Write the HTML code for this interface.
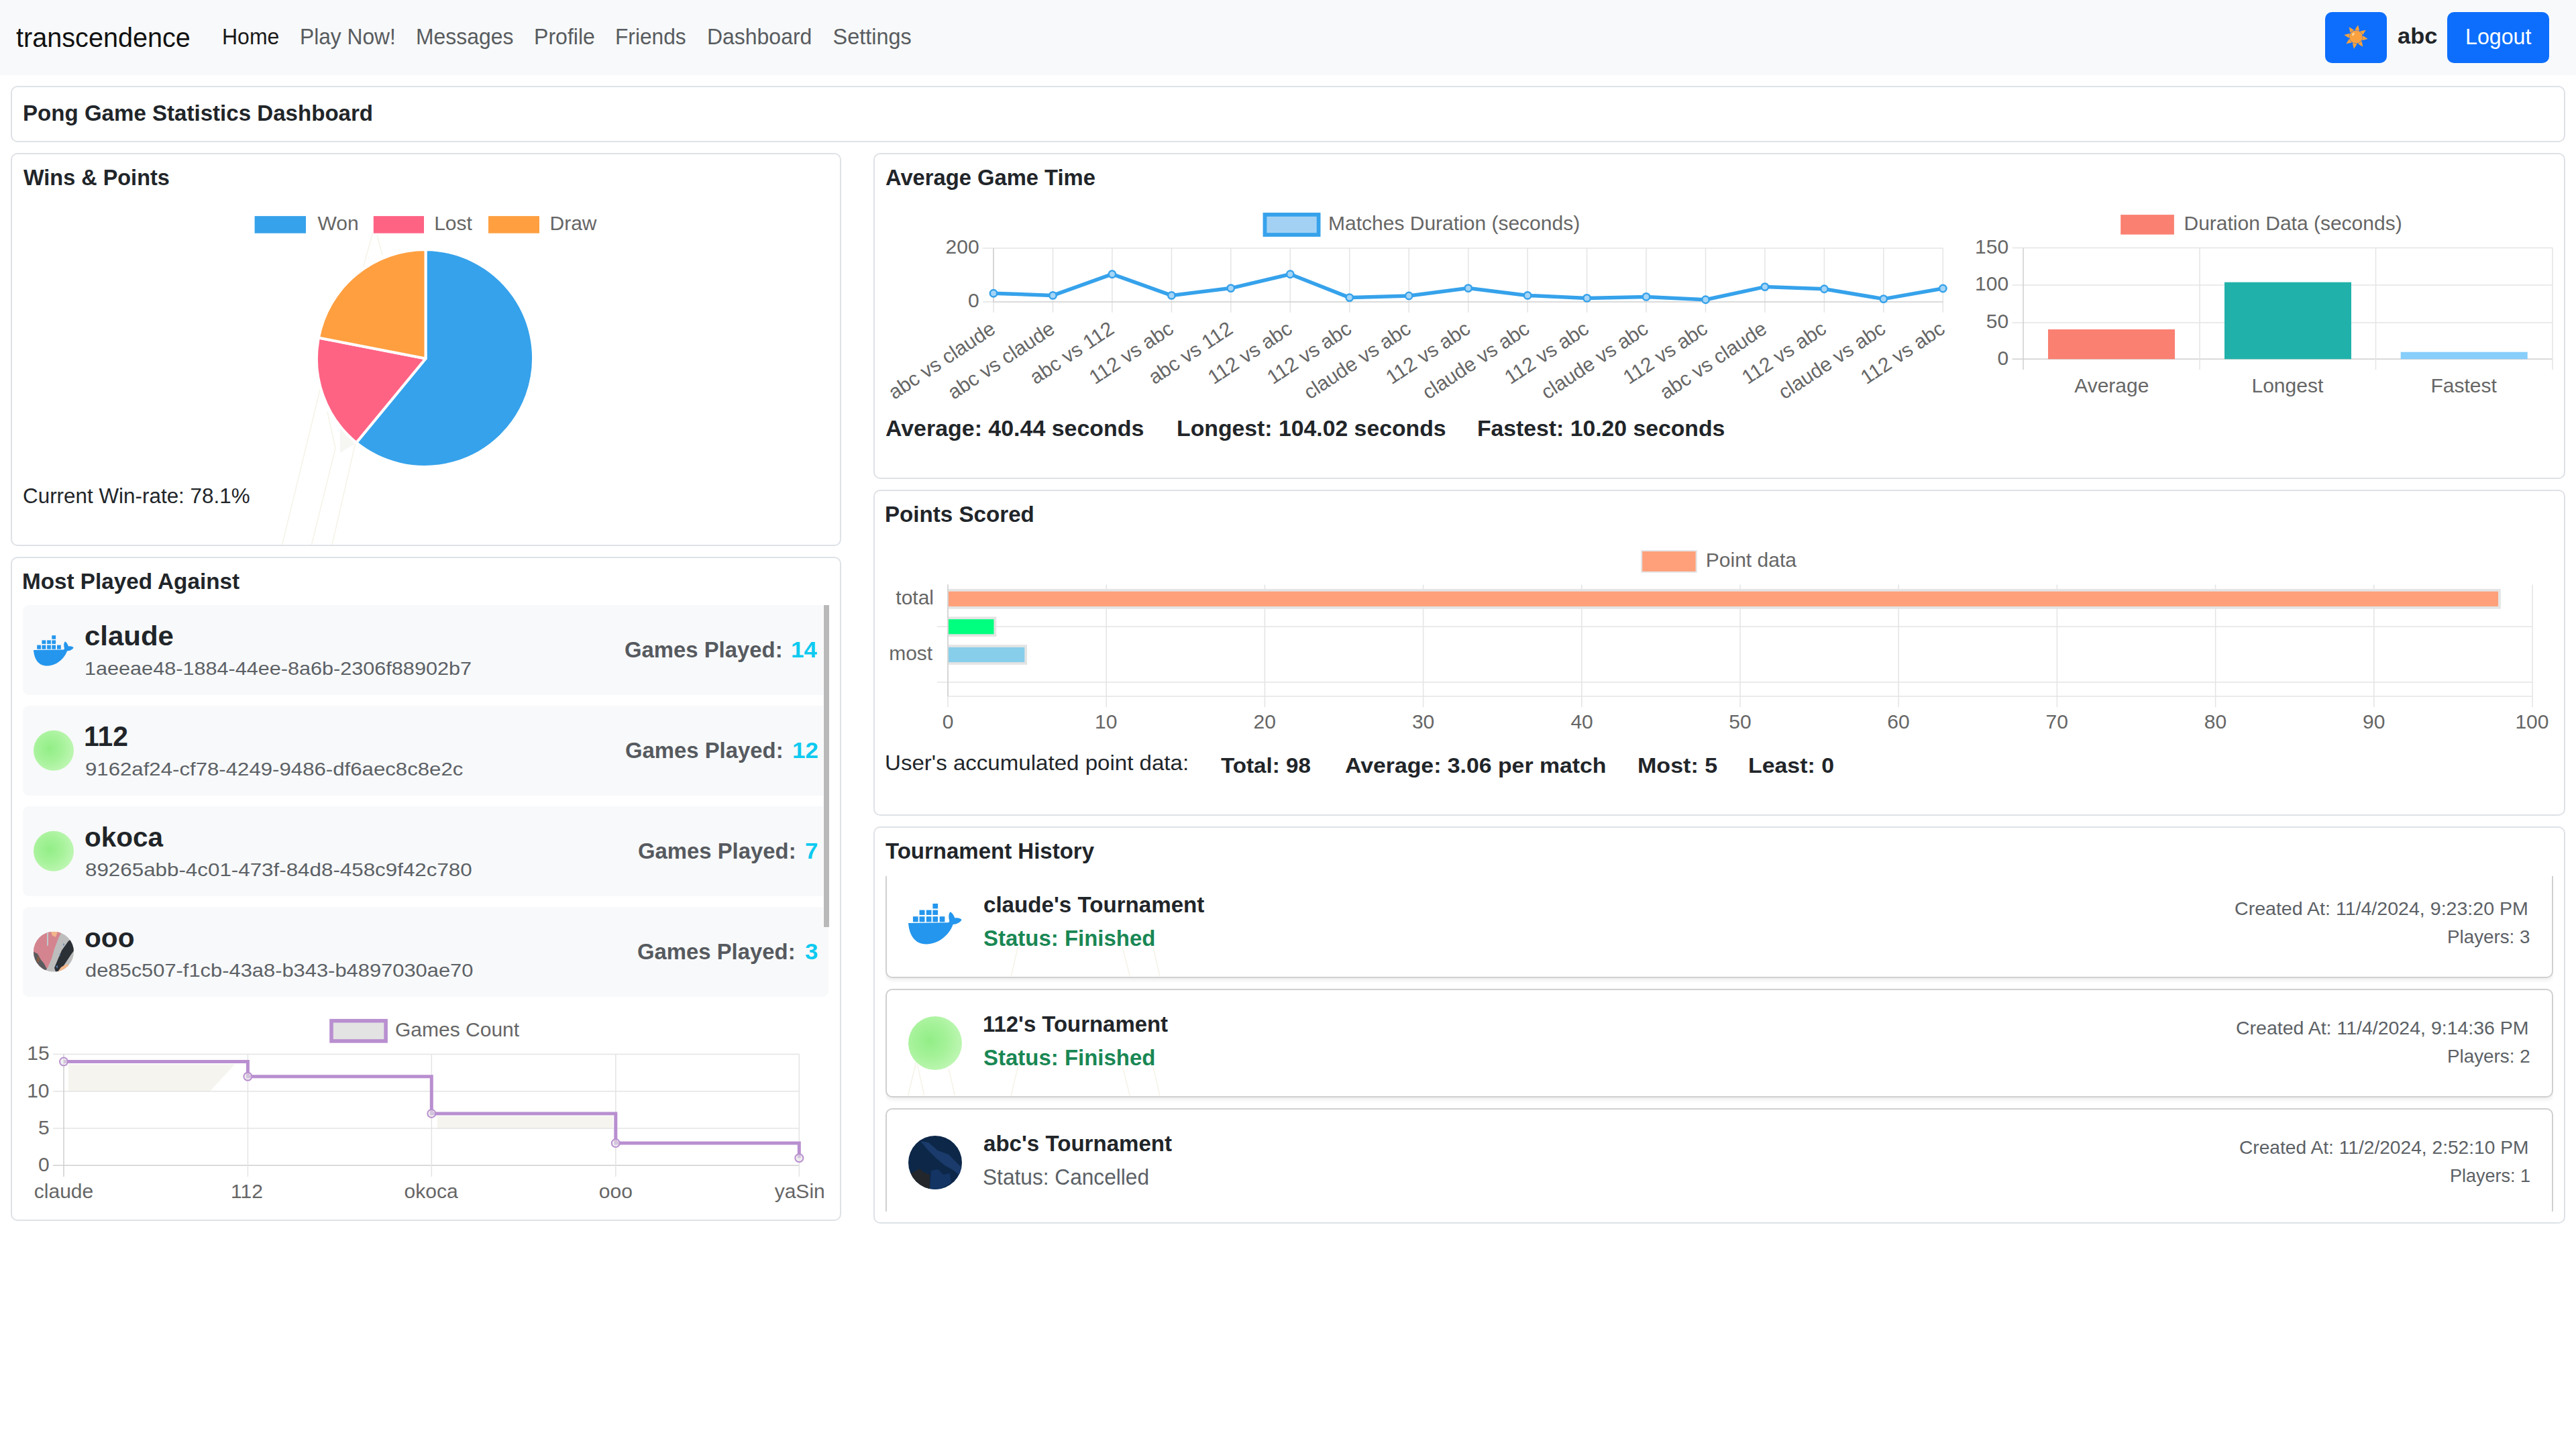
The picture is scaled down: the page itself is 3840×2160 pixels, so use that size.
<!DOCTYPE html>
<html><head><meta charset="utf-8"><style>
html,body{margin:0;padding:0;background:#fff;}
body{width:3840px;height:2160px;position:relative;overflow:hidden;font-family:"Liberation Sans",sans-serif;}
.t{position:absolute;white-space:nowrap;line-height:1.1172;transform-origin:0 0;}
svg text{font-family:"Liberation Sans",sans-serif;}
</style></head><body>
<div style="position:absolute;left:0.0px;top:0.0px;width:3840.0px;height:112.0px;background:#f8f9fa;"></div>
<div class="t" style="left:24.4px;top:32.70px;font-size:40.67px;line-height:46px;color:#111;transform:scaleX(0.9744);">transcendence</div>
<div class="t" style="left:330.8px;top:36.80px;font-size:32.46px;line-height:36px;color:#1a1a1a;transform:scaleX(0.9856);">Home</div>
<div class="t" style="left:447.1px;top:36.80px;font-size:32.46px;line-height:36px;color:#585c60;transform:scaleX(0.9771);">Play Now!</div>
<div class="t" style="left:619.8px;top:36.80px;font-size:32.46px;line-height:36px;color:#585c60;transform:scaleX(0.9826);">Messages</div>
<div class="t" style="left:796.2px;top:36.80px;font-size:32.46px;line-height:36px;color:#585c60;transform:scaleX(0.9885);">Profile</div>
<div class="t" style="left:917.4px;top:36.80px;font-size:32.46px;line-height:36px;color:#585c60;transform:scaleX(0.9769);">Friends</div>
<div class="t" style="left:1054.4px;top:36.80px;font-size:32.46px;line-height:36px;color:#585c60;transform:scaleX(0.9847);">Dashboard</div>
<div class="t" style="left:1241.5px;top:36.80px;font-size:32.46px;line-height:36px;color:#585c60;">Settings</div>
<div style="position:absolute;left:3466.0px;top:18.0px;width:92.0px;height:76.0px;background:#0d6efd;border-radius:10px;"></div>
<div style="position:absolute;left:3648.0px;top:18.0px;width:152.0px;height:76.0px;background:#0d6efd;border-radius:10px;"></div>
<div class="t" style="left:3573.9px;top:35.00px;font-size:32.97px;line-height:37px;font-weight:700;color:#212529;transform:scaleX(1.0441);">abc</div>
<div class="t" style="left:3674.8px;top:35.90px;font-size:33.26px;line-height:37px;color:#fff;transform:scaleX(0.9680);">Logout</div>
<div style="position:absolute;left:16.0px;top:128.0px;width:3808.0px;height:84.0px;box-sizing:border-box;border:2px solid #dee2e6;border-radius:10px;background:#fff;"></div>
<div class="t" style="left:33.7px;top:150.00px;font-size:32.68px;line-height:37px;font-weight:700;color:#212529;transform:scaleX(1.0125);">Pong Game Statistics Dashboard</div>
<div style="position:absolute;left:16.0px;top:228.0px;width:1238.0px;height:586.0px;box-sizing:border-box;border:2px solid #dee2e6;border-radius:10px;background:#fff;"></div>
<div class="t" style="left:35.2px;top:246.00px;font-size:32.82px;line-height:37px;font-weight:700;color:#212529;transform:scaleX(0.9887);">Wins &amp; Points</div>
<div class="t" style="left:473.5px;top:316.00px;font-size:30.00px;line-height:33px;color:#666666;">Won</div>
<div class="t" style="left:647.2px;top:316.00px;font-size:30.00px;line-height:33px;color:#666666;">Lost</div>
<div class="t" style="left:819.5px;top:316.00px;font-size:30.00px;line-height:33px;color:#666666;">Draw</div>
<div class="t" style="left:33.9px;top:720.70px;font-size:32.10px;line-height:36px;color:#212529;transform:scaleX(0.9790);">Current Win-rate: 78.1%</div>
<div style="position:absolute;left:1302.0px;top:228.0px;width:2522.0px;height:486.0px;box-sizing:border-box;border:2px solid #dee2e6;border-radius:10px;background:#fff;"></div>
<div class="t" style="left:1319.8px;top:245.90px;font-size:32.97px;line-height:37px;font-weight:700;color:#212529;transform:scaleX(0.9927);">Average Game Time</div>
<div class="t" style="left:1980.0px;top:316.00px;font-size:30.00px;line-height:33px;color:#666666;">Matches Duration (seconds)</div>
<div class="t" style="left:1409.6px;top:350.80px;font-size:30.00px;line-height:33px;color:#666666;">200</div>
<div class="t" style="left:1443.0px;top:430.60px;font-size:30.00px;line-height:33px;color:#666666;">0</div>
<div class="t" style="left:1319.8px;top:620.20px;font-size:32.97px;line-height:37px;font-weight:700;color:#212529;transform:scaleX(1.0291);">Average: 40.44 seconds</div>
<div class="t" style="left:1753.7px;top:620.20px;font-size:32.97px;line-height:37px;font-weight:700;color:#212529;transform:scaleX(1.0243);">Longest: 104.02 seconds</div>
<div class="t" style="left:2201.7px;top:620.20px;font-size:32.97px;line-height:37px;font-weight:700;color:#212529;transform:scaleX(1.0231);">Fastest: 10.20 seconds</div>
<div class="t" style="left:3255.5px;top:316.00px;font-size:30.00px;line-height:33px;color:#666666;">Duration Data (seconds)</div>
<div class="t" style="left:2944.1px;top:350.80px;font-size:30.00px;line-height:33px;color:#666666;">150</div>
<div class="t" style="left:2944.1px;top:406.20px;font-size:30.00px;line-height:33px;color:#666666;">100</div>
<div class="t" style="left:2960.8px;top:462.20px;font-size:30.00px;line-height:33px;color:#666666;">50</div>
<div class="t" style="left:2977.5px;top:516.50px;font-size:30.00px;line-height:33px;color:#666666;">0</div>
<div class="t" style="left:3092.2px;top:557.50px;font-size:30.00px;line-height:33px;color:#666666;">Average</div>
<div class="t" style="left:3356.5px;top:557.50px;font-size:30.00px;line-height:33px;color:#666666;">Longest</div>
<div class="t" style="left:3623.4px;top:557.50px;font-size:30.00px;line-height:33px;color:#666666;">Fastest</div>
<div style="position:absolute;left:1302.0px;top:730.0px;width:2522.0px;height:486.0px;box-sizing:border-box;border:2px solid #dee2e6;border-radius:10px;background:#fff;"></div>
<div class="t" style="left:1319.0px;top:748.00px;font-size:32.68px;line-height:37px;font-weight:700;color:#212529;transform:scaleX(1.0145);">Points Scored</div>
<div class="t" style="left:2542.8px;top:818.00px;font-size:30.00px;line-height:33px;color:#666666;">Point data</div>
<div class="t" style="left:1404.7px;top:1059.00px;font-size:30.00px;line-height:33px;color:#666666;">0</div>
<div class="t" style="left:1632.0px;top:1059.00px;font-size:30.00px;line-height:33px;color:#666666;">10</div>
<div class="t" style="left:1868.5px;top:1059.00px;font-size:30.00px;line-height:33px;color:#666666;">20</div>
<div class="t" style="left:2104.9px;top:1059.00px;font-size:30.00px;line-height:33px;color:#666666;">30</div>
<div class="t" style="left:2341.4px;top:1059.00px;font-size:30.00px;line-height:33px;color:#666666;">40</div>
<div class="t" style="left:2577.3px;top:1059.00px;font-size:30.00px;line-height:33px;color:#666666;">50</div>
<div class="t" style="left:2813.3px;top:1059.00px;font-size:30.00px;line-height:33px;color:#666666;">60</div>
<div class="t" style="left:3049.5px;top:1059.00px;font-size:30.00px;line-height:33px;color:#666666;">70</div>
<div class="t" style="left:3285.8px;top:1059.00px;font-size:30.00px;line-height:33px;color:#666666;">80</div>
<div class="t" style="left:3522.0px;top:1059.00px;font-size:30.00px;line-height:33px;color:#666666;">90</div>
<div class="t" style="left:3749.4px;top:1059.00px;font-size:30.00px;line-height:33px;color:#666666;">100</div>
<div class="t" style="left:1335.3px;top:874.00px;font-size:30.00px;line-height:33px;color:#666666;">total</div>
<div class="t" style="left:1325.2px;top:957.00px;font-size:30.00px;line-height:33px;color:#666666;">most</div>
<div class="t" style="left:1318.5px;top:1119.00px;font-size:31.81px;line-height:36px;color:#212529;transform:scaleX(1.0403);">User&#x27;s accumulated point data:</div>
<div class="t" style="left:1819.6px;top:1123.00px;font-size:31.95px;line-height:36px;font-weight:700;color:#212529;transform:scaleX(1.0381);">Total: 98</div>
<div class="t" style="left:2005.2px;top:1123.00px;font-size:31.95px;line-height:36px;font-weight:700;color:#212529;transform:scaleX(1.0583);">Average: 3.06 per match</div>
<div class="t" style="left:2440.7px;top:1123.00px;font-size:31.95px;line-height:36px;font-weight:700;color:#212529;transform:scaleX(1.0661);">Most: 5</div>
<div class="t" style="left:2606.3px;top:1123.00px;font-size:31.95px;line-height:36px;font-weight:700;color:#212529;transform:scaleX(1.0604);">Least: 0</div>
<div style="position:absolute;left:16.0px;top:830.0px;width:1238.0px;height:990.0px;box-sizing:border-box;border:2px solid #dee2e6;border-radius:10px;background:#fff;"></div>
<div class="t" style="left:33.0px;top:848.00px;font-size:32.82px;line-height:37px;font-weight:700;color:#212529;transform:scaleX(1.0137);">Most Played Against</div>
<div style="position:absolute;left:34.0px;top:902.2px;width:1201.0px;height:133.5px;background:#f8f9fa;border-radius:9px;"></div>
<div style="position:absolute;left:34.0px;top:1052.2px;width:1201.0px;height:133.5px;background:#f8f9fa;border-radius:9px;"></div>
<div style="position:absolute;left:34.0px;top:1202.2px;width:1201.0px;height:133.5px;background:#f8f9fa;border-radius:9px;"></div>
<div style="position:absolute;left:34.0px;top:1352.2px;width:1201.0px;height:133.5px;background:#f8f9fa;border-radius:9px;"></div>
<div class="t" style="left:125.8px;top:925.20px;font-size:41.10px;line-height:46px;font-weight:700;color:#212529;transform:scaleX(1.0204);">claude</div>
<div class="t" style="left:125.7px;top:980.70px;font-size:27.89px;line-height:31px;color:#5c6166;transform:scaleX(1.0981);">1aeeae48-1884-44ee-8a6b-2306f88902b7</div>
<div class="t" style="left:1179.3px;top:950.80px;font-size:32.29px;line-height:36px;font-weight:700;color:#0dcaf0;transform:scaleX(1.0829);">14</div>
<div class="t" style="left:930.5px;top:950.80px;font-size:32.29px;line-height:36px;font-weight:700;color:#565a5f;transform:scaleX(1.0177);">Games Played:</div>
<div class="t" style="left:124.8px;top:1074.20px;font-size:41.83px;line-height:47px;font-weight:700;color:#212529;transform:scaleX(0.9774);">112</div>
<div class="t" style="left:126.5px;top:1130.70px;font-size:27.89px;line-height:31px;color:#5c6166;transform:scaleX(1.1185);">9162af24-cf78-4249-9486-df6aec8c8e2c</div>
<div class="t" style="left:1180.5px;top:1100.80px;font-size:32.29px;line-height:36px;font-weight:700;color:#0dcaf0;transform:scaleX(1.0829);">12</div>
<div class="t" style="left:931.7px;top:1100.80px;font-size:32.29px;line-height:36px;font-weight:700;color:#565a5f;transform:scaleX(1.0177);">Games Played:</div>
<div class="t" style="left:125.5px;top:1225.20px;font-size:41.10px;line-height:46px;font-weight:700;color:#212529;transform:scaleX(0.9859);">okoca</div>
<div class="t" style="left:126.6px;top:1280.70px;font-size:27.89px;line-height:31px;color:#5c6166;transform:scaleX(1.1242);">89265abb-4c01-473f-84d8-458c9f42c780</div>
<div class="t" style="left:1200.1px;top:1250.80px;font-size:32.29px;line-height:36px;font-weight:700;color:#0dcaf0;transform:scaleX(1.0829);">7</div>
<div class="t" style="left:950.5px;top:1250.80px;font-size:32.29px;line-height:36px;font-weight:700;color:#565a5f;transform:scaleX(1.0177);">Games Played:</div>
<div class="t" style="left:125.5px;top:1375.20px;font-size:41.10px;line-height:46px;font-weight:700;color:#212529;transform:scaleX(0.9887);">ooo</div>
<div class="t" style="left:126.7px;top:1430.70px;font-size:27.89px;line-height:31px;color:#5c6166;transform:scaleX(1.1073);">de85c507-f1cb-43a8-b343-b4897030ae70</div>
<div class="t" style="left:1199.8px;top:1400.80px;font-size:32.29px;line-height:36px;font-weight:700;color:#0dcaf0;transform:scaleX(1.0829);">3</div>
<div class="t" style="left:949.6px;top:1400.80px;font-size:32.29px;line-height:36px;font-weight:700;color:#565a5f;transform:scaleX(1.0177);">Games Played:</div>
<div style="position:absolute;left:1227.0px;top:902.2px;width:1.2px;height:479.5px;background:#fdfdfd;"></div>
<div style="position:absolute;left:1228.2px;top:902.2px;width:7.6px;height:479.5px;background:#b9b9b9;"></div>
<div class="t" style="left:589.0px;top:1518.00px;font-size:30.00px;line-height:33px;color:#666666;">Games Count</div>
<div class="t" style="left:40.3px;top:1553.30px;font-size:30.00px;line-height:33px;color:#666666;">15</div>
<div class="t" style="left:40.2px;top:1608.57px;font-size:30.00px;line-height:33px;color:#666666;">10</div>
<div class="t" style="left:57.0px;top:1663.83px;font-size:30.00px;line-height:33px;color:#666666;">5</div>
<div class="t" style="left:56.9px;top:1719.10px;font-size:30.00px;line-height:33px;color:#666666;">0</div>
<div class="t" style="left:50.8px;top:1759.00px;font-size:30.00px;line-height:33px;color:#666666;">claude</div>
<div class="t" style="left:344.0px;top:1759.00px;font-size:30.00px;line-height:33px;color:#666666;">112</div>
<div class="t" style="left:602.6px;top:1759.00px;font-size:30.00px;line-height:33px;color:#666666;">okoca</div>
<div class="t" style="left:892.8px;top:1759.00px;font-size:30.00px;line-height:33px;color:#666666;">ooo</div>
<div class="t" style="left:1154.7px;top:1759.00px;font-size:30.00px;line-height:33px;color:#666666;">yaSin</div>
<div style="position:absolute;left:1302.0px;top:1232.0px;width:2522.0px;height:592.0px;box-sizing:border-box;border:2px solid #dee2e6;border-radius:10px;background:#fff;"></div>
<div class="t" style="left:1320.4px;top:1250.00px;font-size:32.82px;line-height:37px;font-weight:700;color:#212529;transform:scaleX(1.0054);">Tournament History</div>
<div style="position:absolute;left:1320px;top:1306px;width:2486px;height:499.5px;overflow:hidden;">
<div style="position:absolute;left:0px;top:-10.0px;width:2486px;height:162px;box-sizing:border-box;border:2px solid #d0d0d0;border-radius:10px;background:#fff;box-shadow:0 3px 6px rgba(0,0,0,0.08);"></div>
<div style="position:absolute;left:0px;top:168.0px;width:2486px;height:162px;box-sizing:border-box;border:2px solid #d0d0d0;border-radius:10px;background:#fff;box-shadow:0 3px 6px rgba(0,0,0,0.08);"></div>
<div style="position:absolute;left:0px;top:346.0px;width:2486px;height:162px;box-sizing:border-box;border:2px solid #d0d0d0;border-radius:10px;background:#fff;box-shadow:0 3px 6px rgba(0,0,0,0.08);"></div>
</div>
<div class="t" style="left:1465.5px;top:1330.00px;font-size:32.68px;line-height:37px;font-weight:700;color:#212529;transform:scaleX(1.0138);">claude&#x27;s Tournament</div>
<div class="t" style="left:1465.6px;top:1379.90px;font-size:32.61px;line-height:37px;font-weight:700;color:#198754;transform:scaleX(1.0110);">Status: Finished</div>
<div class="t" style="left:3331.1px;top:1338.60px;font-size:27.31px;line-height:31px;color:#5c6166;transform:scaleX(1.0467);">Created At: 11/4/2024, 9:23:20 PM</div>
<div class="t" style="left:3648.2px;top:1380.50px;font-size:27.16px;line-height:31px;color:#5c6166;transform:scaleX(1.0227);">Players: 3</div>
<div class="t" style="left:1464.7px;top:1508.00px;font-size:32.68px;line-height:37px;font-weight:700;color:#212529;transform:scaleX(1.0072);">112&#x27;s Tournament</div>
<div class="t" style="left:1465.6px;top:1557.90px;font-size:32.61px;line-height:37px;font-weight:700;color:#198754;transform:scaleX(1.0110);">Status: Finished</div>
<div class="t" style="left:3332.5px;top:1516.60px;font-size:27.31px;line-height:31px;color:#5c6166;transform:scaleX(1.0436);">Created At: 11/4/2024, 9:14:36 PM</div>
<div class="t" style="left:3648.2px;top:1558.50px;font-size:27.16px;line-height:31px;color:#5c6166;transform:scaleX(1.0242);">Players: 2</div>
<div class="t" style="left:1465.8px;top:1686.00px;font-size:32.68px;line-height:37px;font-weight:700;color:#212529;transform:scaleX(1.0122);">abc&#x27;s Tournament</div>
<div class="t" style="left:1465.1px;top:1735.90px;font-size:32.61px;line-height:37px;color:#5c6166;transform:scaleX(0.9703);">Status: Cancelled</div>
<div class="t" style="left:3337.6px;top:1694.60px;font-size:27.31px;line-height:31px;color:#5c6166;transform:scaleX(1.0314);">Created At: 11/2/2024, 2:52:10 PM</div>
<div class="t" style="left:3651.7px;top:1736.50px;font-size:27.16px;line-height:31px;color:#5c6166;transform:scaleX(0.9948);">Players: 1</div>
<svg style="position:absolute;left:0;top:0" width="3840" height="2160" viewBox="0 0 3840 2160"><defs>
<radialGradient id="gg" cx="0.4" cy="0.45" r="0.6"><stop offset="0" stop-color="#92ee86"/><stop offset="0.55" stop-color="#a6f29a"/><stop offset="1" stop-color="#bdf6b2"/></radialGradient>
<g id="docker"><path fill="#2496ed" d="M0,22 L44.5,21.5 C46,21 46.3,20 45.5,17.5 C45,14 45.2,11 47,9.4 C49.5,11 51,13.5 52,16.5 C55,15.8 58,16.5 59.7,18.3 C58,21.5 54,23.5 50,23.5 C46,35 34,45.6 20,45.6 C7,45.6 1,35 0,22 Z"/>
<rect x="5.2" y="14.7" width="5.8" height="6.1" fill="#2496ed"/><rect x="12.4" y="14.7" width="6" height="6.1" fill="#2496ed"/><rect x="20.1" y="14.7" width="5.8" height="6.1" fill="#2496ed"/><rect x="27.3" y="14.7" width="5.8" height="6.1" fill="#2496ed"/><rect x="35" y="14.7" width="5.8" height="6.1" fill="#2496ed"/>
<rect x="12.4" y="7.5" width="6" height="5.5" fill="#2496ed"/><rect x="20.1" y="7.5" width="5.8" height="5.5" fill="#2496ed"/><rect x="27.3" y="7.5" width="5.8" height="5.5" fill="#2496ed"/>
<rect x="27.3" y="0.3" width="5.8" height="5.6" fill="#2496ed"/></g>
<clipPath id="c30"><circle cx="30" cy="30" r="30"/></clipPath>
<clipPath id="c40"><circle cx="40" cy="40" r="40"/></clipPath>
<g id="paint"><g clip-path="url(#c30)"><rect width="60" height="60" fill="#bdbdbd"/>
<path d="M0,0 L42,0 L37,10 L31,26 L27,40 L21,54 L12,60 L0,60 Z" fill="#d4848f"/>
<path d="M26,0 L36,0 L33,8 L28,6 Z" fill="#f2b68a"/>
<path d="M0,30 L6,33 L11,42 L16,48 L20,56 L14,60 L0,60 Z" fill="#5a5b5f"/>
<path d="M6,36 L9,40 L8,46 L5,44 Z" fill="#8a5a40"/>
<path d="M62,8 L52,14 L42,28 L36,42 L31,54 L33,60 L40,58 L48,46 L56,34 L62,26 Z" fill="#2b2f36"/>
<path d="M36,60 L41,53 L48,49 L55,50 L50,60 Z" fill="#f0b58a"/>
<path d="M44,18 L46,18 L45,22 Z M38,34 L40,33 L40,37 Z M33,52 L36,50 L36,55 Z" fill="#5577aa"/>
<path d="M20,2 L22,2 L22,20 L20,22 Z" fill="#c0c8cc"/></g></g>
<g id="navy"><g clip-path="url(#c40)"><rect width="80" height="80" fill="#0c2748"/>
<path d="M18,8 L30,10 L44,22 L60,28 L80,48 L80,62 L68,52 L54,44 L42,34 L28,20 Z" fill="#1a3b6b"/>
<path d="M34,52 L44,50 L52,58 L62,56 L64,70 L48,80 L32,80 Z" fill="#143463"/>
<path d="M4,56 L17,49 L22,54 L32,58 L32,80 L0,80 Z" fill="#23262b"/></g></g>
</defs><polygon points="3515.1,37.3 3517.2,45.8 3510.3,44.5" fill="#f8a23a"/><polygon points="3526.7,44.7 3522.2,52.1 3518.2,46.4" fill="#f8a23a"/><polygon points="3529.7,58.1 3521.2,60.2 3522.5,53.3" fill="#f8a23a"/><polygon points="3522.3,69.7 3514.9,65.2 3520.6,61.2" fill="#f8a23a"/><polygon points="3508.9,72.7 3506.8,64.2 3513.7,65.5" fill="#f8a23a"/><polygon points="3497.3,65.3 3501.8,57.9 3505.8,63.6" fill="#f8a23a"/><polygon points="3494.3,51.9 3502.8,49.8 3501.5,56.7" fill="#f8a23a"/><polygon points="3501.7,40.3 3509.1,44.8 3503.4,48.8" fill="#f8a23a"/>
<circle cx="3512" cy="55" r="9.8" fill="#f9a03f"/><ellipse cx="3508" cy="51" rx="1.6" ry="2.6" transform="rotate(30 3508 51)" fill="#fbd49a"/>
<rect x="379.6" y="322.1" width="76.4" height="25.6" fill="#36a2eb"/>
<rect x="556.8" y="322.1" width="75.2" height="25.6" fill="#ff6384"/>
<rect x="728.0" y="322.1" width="76.0" height="25.6" fill="#ff9f40"/>
<line x1="555.8" y1="346.9" x2="540.6" y2="401.0" stroke="#f5f3e7" stroke-width="1.5"/>
<line x1="478.0" y1="576.8" x2="420.6" y2="812.0" stroke="#f5f3e7" stroke-width="1.5"/>
<line x1="500.0" y1="668.0" x2="464.5" y2="812.0" stroke="#f5f3e7" stroke-width="1.5"/>
<line x1="530.4" y1="658.0" x2="495.0" y2="812.0" stroke="#f5f3e7" stroke-width="1.5"/>
<line x1="488.0" y1="614.0" x2="500.0" y2="668.0" stroke="#f5f3e7" stroke-width="1.5"/>
<line x1="562.0" y1="350.0" x2="570.0" y2="380.0" stroke="#f5f3e7" stroke-width="1.5"/>
<polygon points="507,640 520,645 528,662 507,675" fill="#f6f6f3"/>
<path d="M634.5,534.5 L634.5,372.0 A162,162 0 1 1 531.1,659.9 Z" fill="#36a2eb" stroke="#fff" stroke-width="4" stroke-linejoin="round"/>
<path d="M634.5,534.5 L531.1,659.9 A162,162 0 0 1 475.0,503.5 Z" fill="#ff6384" stroke="#fff" stroke-width="4" stroke-linejoin="round"/>
<path d="M634.5,534.5 L475.0,503.5 A162,162 0 0 1 634.5,372.0 Z" fill="#ff9f40" stroke="#fff" stroke-width="4" stroke-linejoin="round"/>
<rect x="1885.5" y="319.9" width="80.1" height="30.1" fill="#a3d1f4" stroke="#36a2eb" stroke-width="5.8"/>
<line x1="1465" y1="369.9" x2="2896.3" y2="369.9" stroke="#e4e4e4" stroke-width="1.5"/>
<line x1="1465" y1="450" x2="1481" y2="450" stroke="#e4e4e4" stroke-width="1.5"/>
<line x1="1481.0" y1="369.9" x2="1481.0" y2="465.7" stroke="#e4e4e4" stroke-width="1.5"/>
<line x1="1569.5" y1="369.9" x2="1569.5" y2="465.7" stroke="#e4e4e4" stroke-width="1.5"/>
<line x1="1657.9" y1="369.9" x2="1657.9" y2="465.7" stroke="#e4e4e4" stroke-width="1.5"/>
<line x1="1746.4" y1="369.9" x2="1746.4" y2="465.7" stroke="#e4e4e4" stroke-width="1.5"/>
<line x1="1834.8" y1="369.9" x2="1834.8" y2="465.7" stroke="#e4e4e4" stroke-width="1.5"/>
<line x1="1923.3" y1="369.9" x2="1923.3" y2="465.7" stroke="#e4e4e4" stroke-width="1.5"/>
<line x1="2011.7" y1="369.9" x2="2011.7" y2="465.7" stroke="#e4e4e4" stroke-width="1.5"/>
<line x1="2100.2" y1="369.9" x2="2100.2" y2="465.7" stroke="#e4e4e4" stroke-width="1.5"/>
<line x1="2188.7" y1="369.9" x2="2188.7" y2="465.7" stroke="#e4e4e4" stroke-width="1.5"/>
<line x1="2277.1" y1="369.9" x2="2277.1" y2="465.7" stroke="#e4e4e4" stroke-width="1.5"/>
<line x1="2365.6" y1="369.9" x2="2365.6" y2="465.7" stroke="#e4e4e4" stroke-width="1.5"/>
<line x1="2454.0" y1="369.9" x2="2454.0" y2="465.7" stroke="#e4e4e4" stroke-width="1.5"/>
<line x1="2542.5" y1="369.9" x2="2542.5" y2="465.7" stroke="#e4e4e4" stroke-width="1.5"/>
<line x1="2630.9" y1="369.9" x2="2630.9" y2="465.7" stroke="#e4e4e4" stroke-width="1.5"/>
<line x1="2719.4" y1="369.9" x2="2719.4" y2="465.7" stroke="#e4e4e4" stroke-width="1.5"/>
<line x1="2807.8" y1="369.9" x2="2807.8" y2="465.7" stroke="#e4e4e4" stroke-width="1.5"/>
<line x1="2896.3" y1="369.9" x2="2896.3" y2="465.7" stroke="#e4e4e4" stroke-width="1.5"/>
<line x1="1481" y1="369.9" x2="1481" y2="450" stroke="#cfcfcf" stroke-width="1.5"/>
<line x1="1481" y1="450" x2="2896.3" y2="450" stroke="#cfcfcf" stroke-width="1.5"/>
<polyline points="1481.0,437.2 1569.5,440.4 1657.9,408.7 1746.4,440.4 1834.8,429.6 1923.3,408.7 2011.7,443.6 2100.2,441.0 2188.7,429.6 2277.1,440.4 2365.6,444.4 2454.0,442.4 2542.5,446.8 2630.9,427.6 2719.4,430.8 2807.8,445.6 2896.3,430.0" fill="none" stroke="#36a2eb" stroke-width="5.5" stroke-linejoin="round"/>
<circle cx="1481.0" cy="437.2" r="5.2" fill="#a6d5f6" stroke="#36a2eb" stroke-width="2.5"/>
<circle cx="1569.5" cy="440.4" r="5.2" fill="#a6d5f6" stroke="#36a2eb" stroke-width="2.5"/>
<circle cx="1657.9" cy="408.7" r="5.2" fill="#a6d5f6" stroke="#36a2eb" stroke-width="2.5"/>
<circle cx="1746.4" cy="440.4" r="5.2" fill="#a6d5f6" stroke="#36a2eb" stroke-width="2.5"/>
<circle cx="1834.8" cy="429.6" r="5.2" fill="#a6d5f6" stroke="#36a2eb" stroke-width="2.5"/>
<circle cx="1923.3" cy="408.7" r="5.2" fill="#a6d5f6" stroke="#36a2eb" stroke-width="2.5"/>
<circle cx="2011.7" cy="443.6" r="5.2" fill="#a6d5f6" stroke="#36a2eb" stroke-width="2.5"/>
<circle cx="2100.2" cy="441.0" r="5.2" fill="#a6d5f6" stroke="#36a2eb" stroke-width="2.5"/>
<circle cx="2188.7" cy="429.6" r="5.2" fill="#a6d5f6" stroke="#36a2eb" stroke-width="2.5"/>
<circle cx="2277.1" cy="440.4" r="5.2" fill="#a6d5f6" stroke="#36a2eb" stroke-width="2.5"/>
<circle cx="2365.6" cy="444.4" r="5.2" fill="#a6d5f6" stroke="#36a2eb" stroke-width="2.5"/>
<circle cx="2454.0" cy="442.4" r="5.2" fill="#a6d5f6" stroke="#36a2eb" stroke-width="2.5"/>
<circle cx="2542.5" cy="446.8" r="5.2" fill="#a6d5f6" stroke="#36a2eb" stroke-width="2.5"/>
<circle cx="2630.9" cy="427.6" r="5.2" fill="#a6d5f6" stroke="#36a2eb" stroke-width="2.5"/>
<circle cx="2719.4" cy="430.8" r="5.2" fill="#a6d5f6" stroke="#36a2eb" stroke-width="2.5"/>
<circle cx="2807.8" cy="445.6" r="5.2" fill="#a6d5f6" stroke="#36a2eb" stroke-width="2.5"/>
<circle cx="2896.3" cy="430.0" r="5.2" fill="#a6d5f6" stroke="#36a2eb" stroke-width="2.5"/>
<text x="1486.0" y="495.0" transform="rotate(-33.5 1486.0 495.0)" text-anchor="end" font-size="30" fill="#666666">abc vs claude</text>
<text x="1574.5" y="495.0" transform="rotate(-33.5 1574.5 495.0)" text-anchor="end" font-size="30" fill="#666666">abc vs claude</text>
<text x="1662.9" y="495.0" transform="rotate(-33.5 1662.9 495.0)" text-anchor="end" font-size="30" fill="#666666">abc vs 112</text>
<text x="1751.4" y="495.0" transform="rotate(-33.5 1751.4 495.0)" text-anchor="end" font-size="30" fill="#666666">112 vs abc</text>
<text x="1839.8" y="495.0" transform="rotate(-33.5 1839.8 495.0)" text-anchor="end" font-size="30" fill="#666666">abc vs 112</text>
<text x="1928.3" y="495.0" transform="rotate(-33.5 1928.3 495.0)" text-anchor="end" font-size="30" fill="#666666">112 vs abc</text>
<text x="2016.7" y="495.0" transform="rotate(-33.5 2016.7 495.0)" text-anchor="end" font-size="30" fill="#666666">112 vs abc</text>
<text x="2105.2" y="495.0" transform="rotate(-33.5 2105.2 495.0)" text-anchor="end" font-size="30" fill="#666666">claude vs abc</text>
<text x="2193.7" y="495.0" transform="rotate(-33.5 2193.7 495.0)" text-anchor="end" font-size="30" fill="#666666">112 vs abc</text>
<text x="2282.1" y="495.0" transform="rotate(-33.5 2282.1 495.0)" text-anchor="end" font-size="30" fill="#666666">claude vs abc</text>
<text x="2370.6" y="495.0" transform="rotate(-33.5 2370.6 495.0)" text-anchor="end" font-size="30" fill="#666666">112 vs abc</text>
<text x="2459.0" y="495.0" transform="rotate(-33.5 2459.0 495.0)" text-anchor="end" font-size="30" fill="#666666">claude vs abc</text>
<text x="2547.5" y="495.0" transform="rotate(-33.5 2547.5 495.0)" text-anchor="end" font-size="30" fill="#666666">112 vs abc</text>
<text x="2635.9" y="495.0" transform="rotate(-33.5 2635.9 495.0)" text-anchor="end" font-size="30" fill="#666666">abc vs claude</text>
<text x="2724.4" y="495.0" transform="rotate(-33.5 2724.4 495.0)" text-anchor="end" font-size="30" fill="#666666">112 vs abc</text>
<text x="2812.8" y="495.0" transform="rotate(-33.5 2812.8 495.0)" text-anchor="end" font-size="30" fill="#666666">claude vs abc</text>
<text x="2901.3" y="495.0" transform="rotate(-33.5 2901.3 495.0)" text-anchor="end" font-size="30" fill="#666666">112 vs abc</text>
<rect x="3161.2" y="320.1" width="79.7" height="29.5" fill="#fa8072"/>
<line x1="2999.6" y1="369.6" x2="3805" y2="369.6" stroke="#e4e4e4" stroke-width="1.5"/>
<line x1="2999.6" y1="425.0" x2="3805" y2="425.0" stroke="#e4e4e4" stroke-width="1.5"/>
<line x1="2999.6" y1="481.0" x2="3805" y2="481.0" stroke="#e4e4e4" stroke-width="1.5"/>
<line x1="2999.6" y1="535.3" x2="3805" y2="535.3" stroke="#cfcfcf" stroke-width="1.5"/>
<line x1="3016.0" y1="369.6" x2="3016.0" y2="551" stroke="#cfcfcf" stroke-width="1.5"/>
<line x1="3279.0" y1="369.6" x2="3279.0" y2="551" stroke="#e4e4e4" stroke-width="1.5"/>
<line x1="3541.5" y1="369.6" x2="3541.5" y2="551" stroke="#e4e4e4" stroke-width="1.5"/>
<line x1="3805.0" y1="369.6" x2="3805.0" y2="551" stroke="#e4e4e4" stroke-width="1.5"/>
<rect x="3053" y="491" width="189" height="44.3" fill="#fa8072"/>
<rect x="3316" y="420.7" width="189" height="114.6" fill="#20b2aa"/>
<rect x="3578.7" y="524.7" width="189" height="10.6" fill="#87cefa"/>
<rect x="2446.1" y="820.1" width="83.8" height="33.6" fill="#e4e4e4"/><rect x="2448.2" y="822" width="79.4" height="29.8" fill="#ffa07a"/>
<line x1="1413.0" y1="871.5" x2="1413.0" y2="1054" stroke="#e4e4e4" stroke-width="1.5"/>
<line x1="1649.2" y1="871.5" x2="1649.2" y2="1054" stroke="#e4e4e4" stroke-width="1.5"/>
<line x1="1885.4" y1="871.5" x2="1885.4" y2="1054" stroke="#e4e4e4" stroke-width="1.5"/>
<line x1="2121.6" y1="871.5" x2="2121.6" y2="1054" stroke="#e4e4e4" stroke-width="1.5"/>
<line x1="2357.8" y1="871.5" x2="2357.8" y2="1054" stroke="#e4e4e4" stroke-width="1.5"/>
<line x1="2594.0" y1="871.5" x2="2594.0" y2="1054" stroke="#e4e4e4" stroke-width="1.5"/>
<line x1="2830.2" y1="871.5" x2="2830.2" y2="1054" stroke="#e4e4e4" stroke-width="1.5"/>
<line x1="3066.4" y1="871.5" x2="3066.4" y2="1054" stroke="#e4e4e4" stroke-width="1.5"/>
<line x1="3302.6" y1="871.5" x2="3302.6" y2="1054" stroke="#e4e4e4" stroke-width="1.5"/>
<line x1="3538.8" y1="871.5" x2="3538.8" y2="1054" stroke="#e4e4e4" stroke-width="1.5"/>
<line x1="3775.0" y1="871.5" x2="3775.0" y2="1054" stroke="#e4e4e4" stroke-width="1.5"/>
<line x1="1397" y1="934.0" x2="3775.0" y2="934.0" stroke="#e4e4e4" stroke-width="1.5"/>
<line x1="1397" y1="1017.0" x2="3775.0" y2="1017.0" stroke="#e4e4e4" stroke-width="1.5"/>
<line x1="1413" y1="1038" x2="3775.0" y2="1038" stroke="#e4e4e4" stroke-width="1.5"/>
<line x1="1413" y1="871.5" x2="1413" y2="1038" stroke="#cfcfcf" stroke-width="1.5"/>
<rect x="1414" y="877.9" width="2313.8" height="29.8" fill="#e4e4e4"/>
<rect x="1414" y="881.7" width="2310.0" height="22.2" fill="#ffa07a"/>
<rect x="1414" y="919.3" width="71.3" height="29.8" fill="#e4e4e4"/>
<rect x="1414" y="923.1" width="67.5" height="22.2" fill="#00ff7f"/>
<rect x="1414" y="961.1" width="117.1" height="29.8" fill="#e4e4e4"/>
<rect x="1414" y="964.9" width="113.3" height="22.2" fill="#87ceeb"/>
<g transform="translate(50.0,946.9) scale(1)"><use href="#docker"/></g>
<circle cx="80.0" cy="1118.7" r="30" fill="url(#gg)"/>
<circle cx="80.0" cy="1268.7" r="30" fill="url(#gg)"/>
<g transform="translate(50.0,1388.7)"><use href="#paint"/></g>
<rect x="494" y="1521.7" width="81.1" height="30.2" fill="#e3e3e3" stroke="#b98fd0" stroke-width="5.6"/>
<polygon points="102,1586.5 350,1586.5 313,1626.8 102,1626.8" fill="#f5f4ee"/>
<rect x="651.7" y="1663.6" width="262" height="19.4" fill="#f5f4ee"/>
<line x1="79" y1="1571.5" x2="1191.3" y2="1571.5" stroke="#e4e4e4" stroke-width="1.5"/>
<line x1="79" y1="1626.8" x2="1191.3" y2="1626.8" stroke="#e4e4e4" stroke-width="1.5"/>
<line x1="79" y1="1682.0" x2="1191.3" y2="1682.0" stroke="#e4e4e4" stroke-width="1.5"/>
<line x1="79" y1="1737.3" x2="1191.3" y2="1737.3" stroke="#cfcfcf" stroke-width="1.5"/>
<line x1="95.0" y1="1571.5" x2="95.0" y2="1754" stroke="#cfcfcf" stroke-width="1.5"/>
<line x1="369.4" y1="1571.5" x2="369.4" y2="1754" stroke="#e4e4e4" stroke-width="1.5"/>
<line x1="643.3" y1="1571.5" x2="643.3" y2="1754" stroke="#e4e4e4" stroke-width="1.5"/>
<line x1="917.8" y1="1571.5" x2="917.8" y2="1754" stroke="#e4e4e4" stroke-width="1.5"/>
<line x1="1191.3" y1="1571.5" x2="1191.3" y2="1754" stroke="#e4e4e4" stroke-width="1.5"/>
<path d="M95.0,1582.6 L369.4,1582.6 L369.4,1604.7 L643.3,1604.7 L643.3,1659.9 L917.8,1659.9 L917.8,1704.1 L1191.3,1704.1 L1191.3,1726.2" fill="none" stroke="#b98fd0" stroke-width="5"/>
<circle cx="95.0" cy="1582.6" r="6" fill="rgba(230,230,230,0.6)" stroke="#b98fd0" stroke-width="2"/>
<circle cx="369.4" cy="1604.7" r="6" fill="rgba(230,230,230,0.6)" stroke="#b98fd0" stroke-width="2"/>
<circle cx="643.3" cy="1659.9" r="6" fill="rgba(230,230,230,0.6)" stroke="#b98fd0" stroke-width="2"/>
<circle cx="917.8" cy="1704.1" r="6" fill="rgba(230,230,230,0.6)" stroke="#b98fd0" stroke-width="2"/>
<circle cx="1191.3" cy="1726.2" r="6" fill="rgba(230,230,230,0.6)" stroke="#b98fd0" stroke-width="2"/>
<g transform="translate(1354.0,1346.6) scale(1.3333)"><use href="#docker"/></g>
<circle cx="1394.0" cy="1555.0" r="40" fill="url(#gg)"/>
<g transform="translate(1354.0,1693.0)"><use href="#navy"/></g>
<line x1="1517.5" y1="1410.7" x2="1507.3" y2="1455.5" stroke="#f5f3e7" stroke-width="1.5"/>
<line x1="1673.0" y1="1410.7" x2="1684.3" y2="1455.5" stroke="#f5f3e7" stroke-width="1.5"/>
<line x1="1718.7" y1="1410.7" x2="1729.0" y2="1455.5" stroke="#f5f3e7" stroke-width="1.5"/>
<line x1="1517.5" y1="1588.7" x2="1507.3" y2="1633.5" stroke="#f5f3e7" stroke-width="1.5"/>
<line x1="1673.0" y1="1588.7" x2="1684.3" y2="1633.5" stroke="#f5f3e7" stroke-width="1.5"/>
<line x1="1718.7" y1="1588.7" x2="1729.0" y2="1633.5" stroke="#f5f3e7" stroke-width="1.5"/>
<line x1="1365.6" y1="1584.0" x2="1353.5" y2="1633.0" stroke="#f5f3e7" stroke-width="1.5"/>
<line x1="1367.5" y1="1586.8" x2="1377.8" y2="1633.0" stroke="#f5f3e7" stroke-width="1.5"/>
<line x1="1414.0" y1="1592.4" x2="1423.4" y2="1633.0" stroke="#f5f3e7" stroke-width="1.5"/></svg>
</body></html>
